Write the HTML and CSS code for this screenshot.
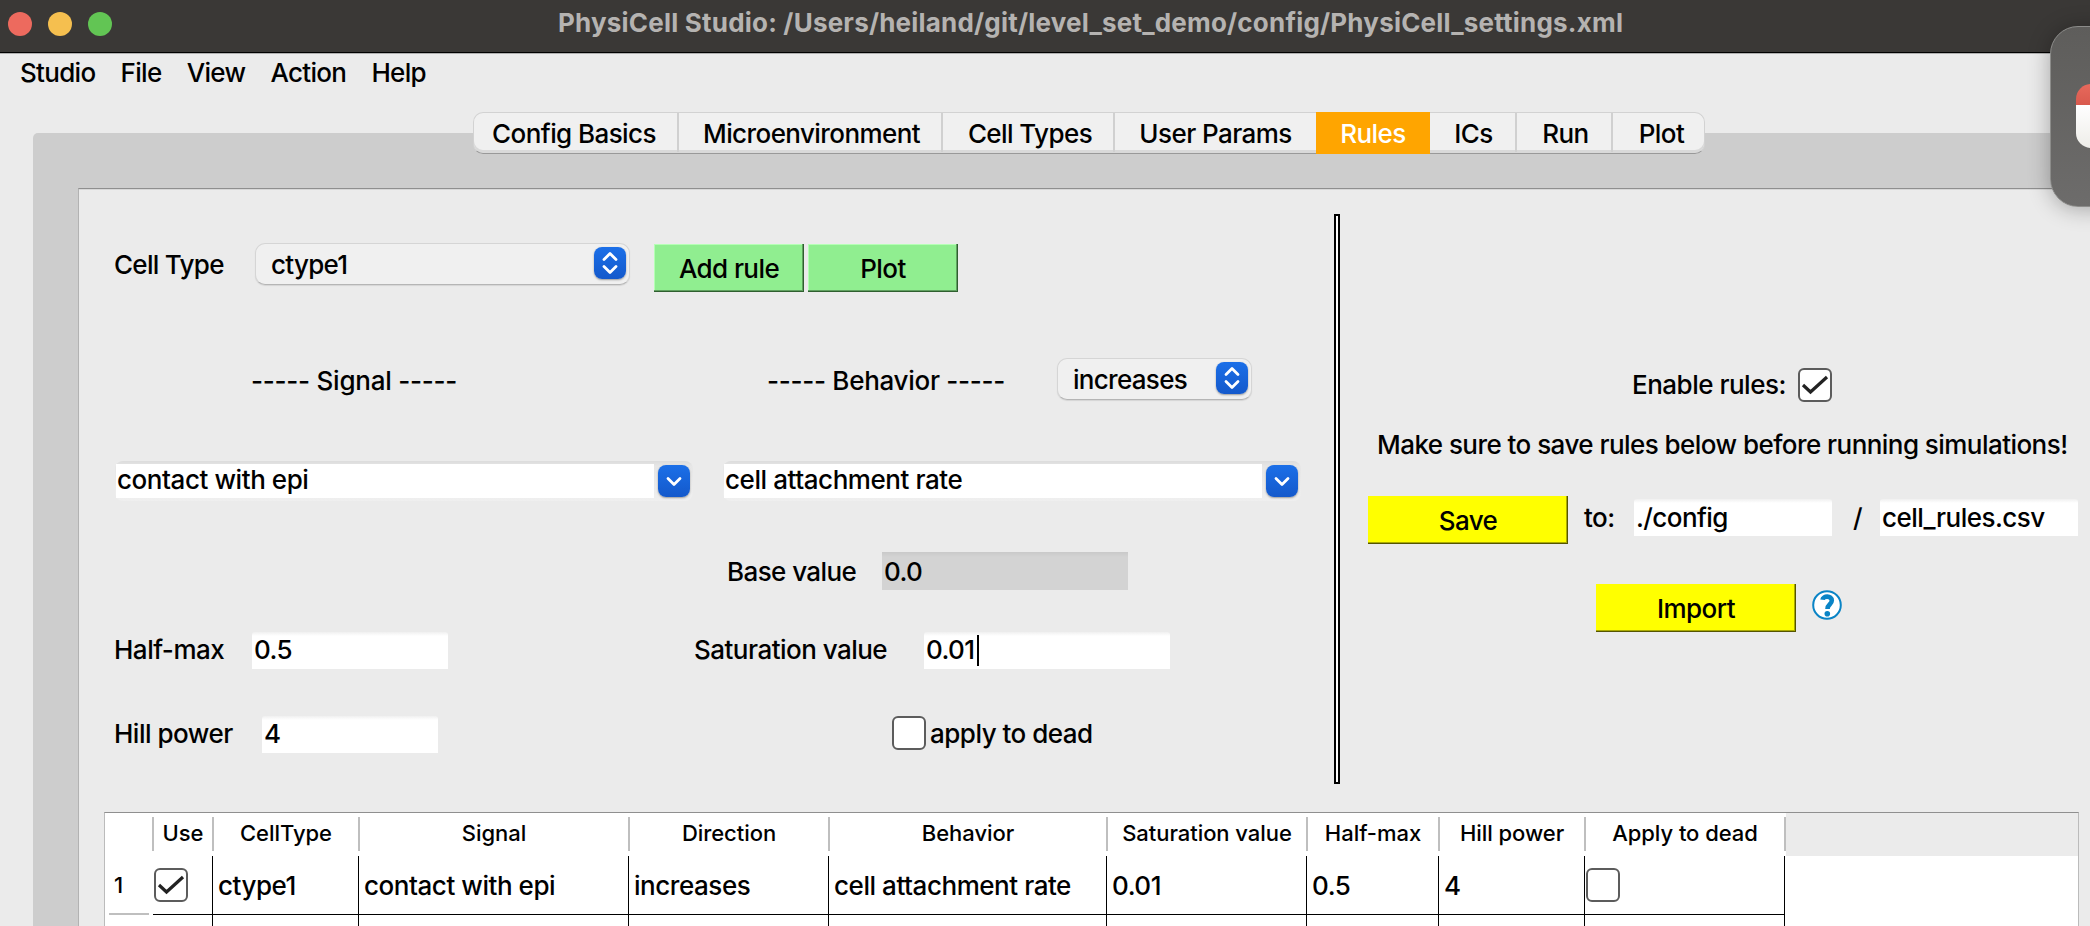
FILE: index.html
```html
<!DOCTYPE html>
<html lang="en">
<head>
<meta charset="utf-8">
<title>PhysiCell Studio</title>
<link rel="stylesheet" href="styles.css">
</head>
<body>
<div class="window">
  <header class="titlebar">
    <div class="lights"><i class="light red"></i><i class="light amber"></i><i class="light green"></i></div>
    <h1 class="title">PhysiCell Studio: /Users/heiland/git/level_set_demo/config/PhysiCell_settings.xml</h1>
  </header>
  <nav class="menubar">
    <span>Studio</span><span>File</span><span>View</span><span>Action</span><span>Help</span>
  </nav>
  <main class="pane">
    <div class="tabs">
      <div class="tab t-config"><span>Config Basics</span></div>
      <div class="tab t-micro"><span>Microenvironment</span></div>
      <div class="tab t-types"><span>Cell Types</span></div>
      <div class="tab t-params"><span>User Params</span></div>
      <div class="tab t-rules active"><span>Rules</span></div>
      <div class="tab t-ics"><span>ICs</span></div>
      <div class="tab t-run"><span>Run</span></div>
      <div class="tab t-plot"><span>Plot</span></div>
    </div>
    <section class="panel">
      <div class="editor">
        <div class="form">
          <div class="row r-type">
            <label class="w-type">Cell Type</label>
            <div class="popup p-type"><span>ctype1</span><svg class="knob" viewBox="0 0 32 32"><path d="M10 12.5L16 6.5L22 12.5M10 19.5L16 25.5L22 19.5"/></svg></div>
            <button class="btn green-btn b-add">Add rule</button>
            <button class="btn green-btn b-plot">Plot</button>
          </div>
          <div class="row r-heads">
            <label class="w-signal">----- Signal -----</label>
            <label class="w-behavior">----- Behavior -----</label>
            <div class="popup p-dir"><span>increases</span><svg class="knob" viewBox="0 0 32 32"><path d="M10 12.5L16 6.5L22 12.5M10 19.5L16 25.5L22 19.5"/></svg></div>
          </div>
          <div class="row r-combos">
            <div class="combo"><div class="combo-text"><span>contact with epi</span></div><svg class="knob" viewBox="0 0 32 32"><path d="M10 13.5L16 19.5L22 13.5"/></svg></div>
            <div class="combo"><div class="combo-text"><span>cell attachment rate</span></div><svg class="knob" viewBox="0 0 32 32"><path d="M10 13.5L16 19.5L22 13.5"/></svg></div>
          </div>
          <div class="row r-base">
            <label class="w-base">Base value</label>
            <div class="field disabled f-base">0.0</div>
          </div>
          <div class="row r-half">
            <label class="w-half">Half-max</label>
            <div class="field f-half">0.5</div>
            <label class="w-sat">Saturation value</label>
            <div class="field f-sat">0.01<i class="caret"></i></div>
          </div>
          <div class="row r-hill">
            <label class="w-hill">Hill power</label>
            <div class="field f-hill">4</div>
            <div class="check c-dead"></div>
            <label class="w-dead">apply to dead</label>
          </div>
        </div>
        <div class="divider"></div>
        <div class="files">
          <div class="row r-enable">
            <label>Enable rules:</label>
            <div class="check"><svg viewBox="0 0 34 34"><path d="M5 17L12.500 24L29 9"/></svg></div>
          </div>
          <p class="notice">Make sure to save rules below before running simulations!</p>
          <div class="row r-save">
            <button class="btn yellow-btn">Save</button>
            <label class="w-to">to:</label>
            <div class="field f-dir">./config</div>
            <label class="w-slash">/</label>
            <div class="field f-file">cell_rules.csv</div>
          </div>
          <div class="row r-import">
            <button class="btn yellow-btn">Import</button>
            <svg class="help" viewBox="0 0 30 30"><circle cx="15" cy="15" r="13.800"/><path d="M10.500 9.800C11 5.600 19.800 5.400 19.800 10.500C19.800 14.500 15.500 14 15.500 19"/><circle class="dot" cx="15.300" cy="23.800" r="2.800"/></svg>
          </div>
        </div>
      </div>
      <div class="table">
        <div class="thead">
          <div class="corner"></div>
          <div>Use</div><div>CellType</div><div>Signal</div><div>Direction</div><div>Behavior</div><div>Saturation value</div><div>Half-max</div><div>Hill power</div><div>Apply to dead</div>
        </div>
        <div class="tbody">
          <div class="rowhead">1</div>
          <div class="cell chk"><div class="check"><svg viewBox="0 0 34 34"><path d="M5 17L12.500 24L29 9"/></svg></div></div>
          <div class="cell">ctype1</div><div class="cell">contact with epi</div><div class="cell">increases</div><div class="cell">cell attachment rate</div><div class="cell">0.01</div><div class="cell">0.5</div><div class="cell">4</div>
          <div class="cell chk"><div class="check"></div></div>
          <div class="rowhead"></div>
          <div class="cell"></div><div class="cell"></div><div class="cell"></div><div class="cell"></div><div class="cell"></div><div class="cell"></div><div class="cell"></div><div class="cell"></div><div class="cell"></div>
        </div>
      </div>
    </section>
  </main>
  <aside class="dock"><div class="calendar"></div></aside>
</div>
</body>
</html>
```
FILE: styles.css
```css
* { box-sizing: border-box; }
body { margin: 0; }
.window {
  position: relative;
  width: 2090px;
  height: 926px;
  overflow: hidden;
  background: #ebebeb;
  color: #000;
  font: 450 26px/32px Inter, "Liberation Sans", sans-serif;
  letter-spacing: -0.58px;
  white-space: nowrap;
}

/* Title and menu bars */
.titlebar {
  display: flex;
  height: 54px;
  background: #3a3836;
  border-bottom: 1px solid #b0b0b0;
  box-shadow: inset 0 -1px #000;
}
.lights { display: flex; gap: 16px; width: 558px; padding: 12px 0 0 8px; }
.light { width: 24px; height: 24px; border-radius: 50%; }
.red { background: #ed6a5e; }
.amber { background: #f5bf4f; }
.green { background: #62c554; }
.title { margin: 7px 0 0; font-size: 26px; line-height: 32px; font-weight: 700; letter-spacing: 0.2px; color: #b5b3b1; }
.menubar { display: flex; gap: 25.2px; height: 79px; padding: 3px 0 0 20px; letter-spacing: -0.7px; }

/* Tab bar straddling the top edge of the pane */
.pane {
  margin-left: 33px;
  height: 793px;
  background: #cdcdcd;
  border-radius: 5px 0 0 0;
}
.tabs {
  position: relative;
  top: -21px;
  display: flex;
  width: 1232px;
  height: 42px;
  margin-left: 440px;
  background: #f0f0f0;
  border: 1px solid #d2d2d2;
  border-bottom-color: #999;
  border-radius: 10px;
  box-shadow: inset 0 -3px #d9d9d9;
}
.tab { display: flex; justify-content: center; padding-top: 5px; height: 39px; border-right: 2px solid #d0d0d0; }
.tab.active { height: 42px; margin: -1px 0 0; padding-top: 6px; background: #ffa500; color: #fff; border: 0; }
.t-config { width: 205px; padding-right: 3px; }
.t-micro { width: 264px; padding-left: 3px; }
.t-types { width: 172px; padding-left: 4px; }
.t-params { width: 201px; border-right: 0; }
.t-rules { width: 114px; }
.t-ics { width: 87px; padding-left: 2px; }
.t-run { width: 96px; padding-left: 3px; }
.t-plot { width: 91px; padding-left: 6px; border: 0; }

.panel {
  margin: 13px 0 0 45px;
  height: 738px;
  background: #ebebeb;
  border-top: 1px solid #8f8f8f;
  border-left: 1px solid #b2b2b2;
  box-shadow: inset 0 1px #d8d8d8;
}
.editor { display: flex; height: 623px; }
.form { width: 1255px; padding: 54px 0 0 36px; }
.row { display: flex; align-items: flex-start; }
.form label { text-indent: -1px; }

/* Controls */
.popup {
  display: flex;
  justify-content: space-between;
  height: 42px;
  padding: 4px 3px 0 15px;
  background: #f0f0f0;
  border: 1px solid #d5d5d5;
  border-bottom-color: #b5b5b5;
  border-radius: 10px;
  box-shadow: 0 1px 1px #d5d5d5;
  letter-spacing: -0.7px;
}
.popup span { padding-top: 1px; }
.popup .knob { margin-top: -1px; }
.knob {
  flex: none;
  width: 32px;
  height: 32px;
  background: linear-gradient(#1b6fe8, #1459cb);
  border-radius: 8px;
  box-shadow: 0 1px 2px #999;
}
.knob path { fill: none; stroke: #fff; stroke-width: 2.800; stroke-linecap: round; stroke-linejoin: round; }
.btn { height: 48px; padding: 1px 0 0; border: 0; font: inherit; letter-spacing: inherit; color: #000; text-align: center; }
.green-btn { width: 150px; background: #90ee90; box-shadow: inset -1px -1px #2f5f2f, inset -2px -2px #60a060, inset 1px 1px #b5ffb5; }
.yellow-btn { width: 200px; background: #ff0; box-shadow: inset -1px -1px #555500, inset -2px -2px #aaaa00; }
.combo {
  display: flex;
  width: 578px;
  height: 40px;
  padding: 3px 3px 3px 1px;
  border-radius: 8px;
  background: linear-gradient(#dcdcdc, #e6e6e6 5px, #efefef);
}
.combo-text { width: 538px; height: 34px; margin-right: 4px; padding-left: 1px; background: #fff; line-height: 31px; letter-spacing: -0.43px; }
.combo .knob { margin-top: 1px; }
.field { height: 37px; padding-left: 2px; background: linear-gradient(#f0f0f0, #fff 4px); border-radius: 3px 3px 0 0; line-height: 36px; }
.field.disabled { height: 38px; background: linear-gradient(#c9c9c9, #d3d3d3 5px); border-radius: 0; line-height: 39px; }
.f-file { letter-spacing: -0.5px; }
.caret { display: inline-block; width: 2px; height: 31px; margin-left: 2px; background: #000; vertical-align: -7px; }
.check { flex: none; width: 34px; height: 34px; background: #fff; border: 2px solid #5c5c5c; border-radius: 6px; }
.check svg { display: block; width: 34px; height: 34px; margin: -2px; }
.check path { fill: none; stroke: #222; stroke-width: 3.2; }

/* Rule form rows */
.r-type { height: 115px; }
.r-type label { width: 140px; padding-top: 6px; letter-spacing: -0.7px; }
.p-type { width: 375px; margin-right: 24px; }
.r-type .btn { margin-top: 1px; margin-right: 4px; }
.r-heads { height: 103px; padding-left: 137px; }
.w-signal { width: 516px; padding-top: 7px; letter-spacing: -0.25px; }
.w-behavior { width: 289px; padding-top: 7px; letter-spacing: -0.28px; }
.p-dir { width: 195px; }
.r-combos { height: 91px; gap: 30px; }
.r-base { height: 80px; padding-left: 613px; }
.w-base { width: 154px; padding-top: 4px; }
.f-base { width: 246px; }
.r-half { height: 84px; }
.w-half { width: 137px; padding-top: 2px; letter-spacing: -0.5px; }
.f-half { width: 196px; }
.w-sat { width: 229px; margin-left: 247px; padding-top: 2px; letter-spacing: -0.52px; }
.f-sat { width: 246px; }
.w-hill { width: 147px; padding-top: 2px; letter-spacing: -0.5px; }
.f-hill { width: 176px; }
.c-dead { margin-left: 454px; }
.w-dead { margin-left: 5px; padding-top: 2px; letter-spacing: -0.5px; }

.divider { width: 6px; height: 570px; margin-top: 25px; background: #fff; border: 2px solid #000; }

/* Rule file controls */
.files { padding: 179px 0 0 28px; }
.r-enable { height: 61px; padding-left: 264px; }
.r-enable label { width: 166px; padding-top: 1px; letter-spacing: -0.5px; }
.notice { height: 67px; margin: 0 0 0 9px; letter-spacing: -0.55px; }
.r-save { height: 88px; }
.w-to { width: 50px; margin-left: 16px; padding-top: 6px; }
.r-save .field { width: 198px; margin-top: 3px; line-height: 37px; }
.w-slash { width: 27px; margin-left: 21px; padding-top: 6px; }
.r-import { padding-left: 228px; }
.help { width: 30px; height: 30px; margin: 6px 0 0 16px; }
.help circle { fill: #fff; stroke: #0a84c6; stroke-width: 2; }
.help path { fill: none; stroke: #0a84c6; stroke-width: 4.6; }
.help .dot { fill: #0a84c6; stroke: none; }

/* Rules table */
.table {
  width: 1975px;
  height: 130px;
  margin-left: 25px;
  background: #fff;
  border: 1px solid #bbb;
  border-top: 1px solid #8f8f8f;
}
.thead, .tbody { display: grid; grid-template-columns: 49px 60px 146px 270px 200px 278px 200px 132px 146px 200px; }
.thead { height: 43px; padding-top: 4px; background: linear-gradient(90deg, #fff 1681px, #ebebeb 1681px); font-size: 22px; text-align: center; letter-spacing: -0.05px; }
.thead div { height: 34px; border-right: 2px solid #bfbfbf; line-height: 33px; }
.tbody { grid-template-rows: 59px 27px; margin-left: -1px; }
.cell { padding: 14px 0 0 5px; border-right: 1px solid #000; border-bottom: 1px solid #000; letter-spacing: -0.45px; }
.rowhead { margin: 0 4px 0 5px; padding: 13px 0 0 5px; font-size: 22px; border-bottom: 2px solid #bfbfbf; }
.cell.chk { padding: 12px 0 0 1px; }

/* Dock peeking in at the right edge */
.dock {
  position: absolute;
  left: 2050px;
  top: 26px;
  width: 90px;
  height: 181px;
  padding: 57px 0 0 25px;
  background: linear-gradient(#5e5d5b, #6d6c6b);
  border: 1px solid #8c8c8a;
  border-radius: 28px;
  box-shadow: 0 2px 22px rgba(0, 0, 0, 0.3);
}
.calendar { width: 64px; height: 64px; border-radius: 15px; background: linear-gradient(#e7695c, #d95a4e 21px, #fff 21px, #eeede9); }
```
